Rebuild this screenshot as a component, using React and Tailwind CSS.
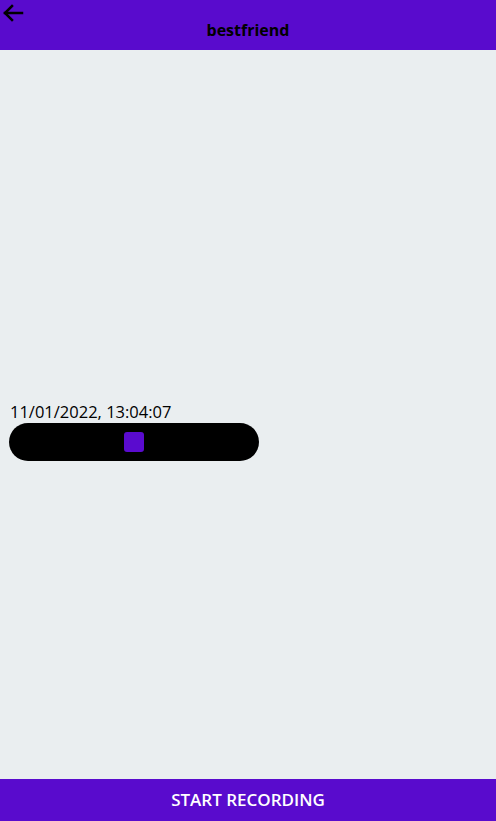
import React from "react";

function BackArrow() {
	return (
		<svg width="26" height="24" viewBox="0 0 26 24" fill="none" stroke="black" strokeWidth="2.5" strokeLinecap="square">
			<path d="M5 12H22" />
			<path d="M12 5L5 12L12 19" />
		</svg>
	);
}

export default function App() {
	return (
		<div className="flex flex-col h-screen w-full bg-[#eaeef0] font-['Open_Sans','Noto_Sans',sans-serif]">
			<header className="flex flex-col h-[50px] shrink-0 bg-[#590bcd]">
				<button className="h-[20px] w-[26px] pt-[1px] flex items-start">
					<BackArrow />
				</button>
				<h1 className="text-center text-[16px] leading-[20px] font-bold text-black">bestfriend</h1>
			</header>
			<main className="flex flex-col justify-center flex-1 px-[9px] pt-[34px]">
				<div className="pl-[1px] text-[16.5px] leading-[19px] text-black">11/01/2022, 13:04:07</div>
				<div className="flex items-center justify-center w-[250px] h-[38px] mt-[2px] bg-black rounded-full">
					<div className="w-[20px] h-[20px] rounded-[3px] bg-[#5a0bcf]" />
				</div>
			</main>
			<footer className="flex items-center justify-center h-[42px] shrink-0 bg-[#590bcd]">
				<span className="text-[17px] font-semibold text-white">START RECORDING</span>
			</footer>
		</div>
	);
}
